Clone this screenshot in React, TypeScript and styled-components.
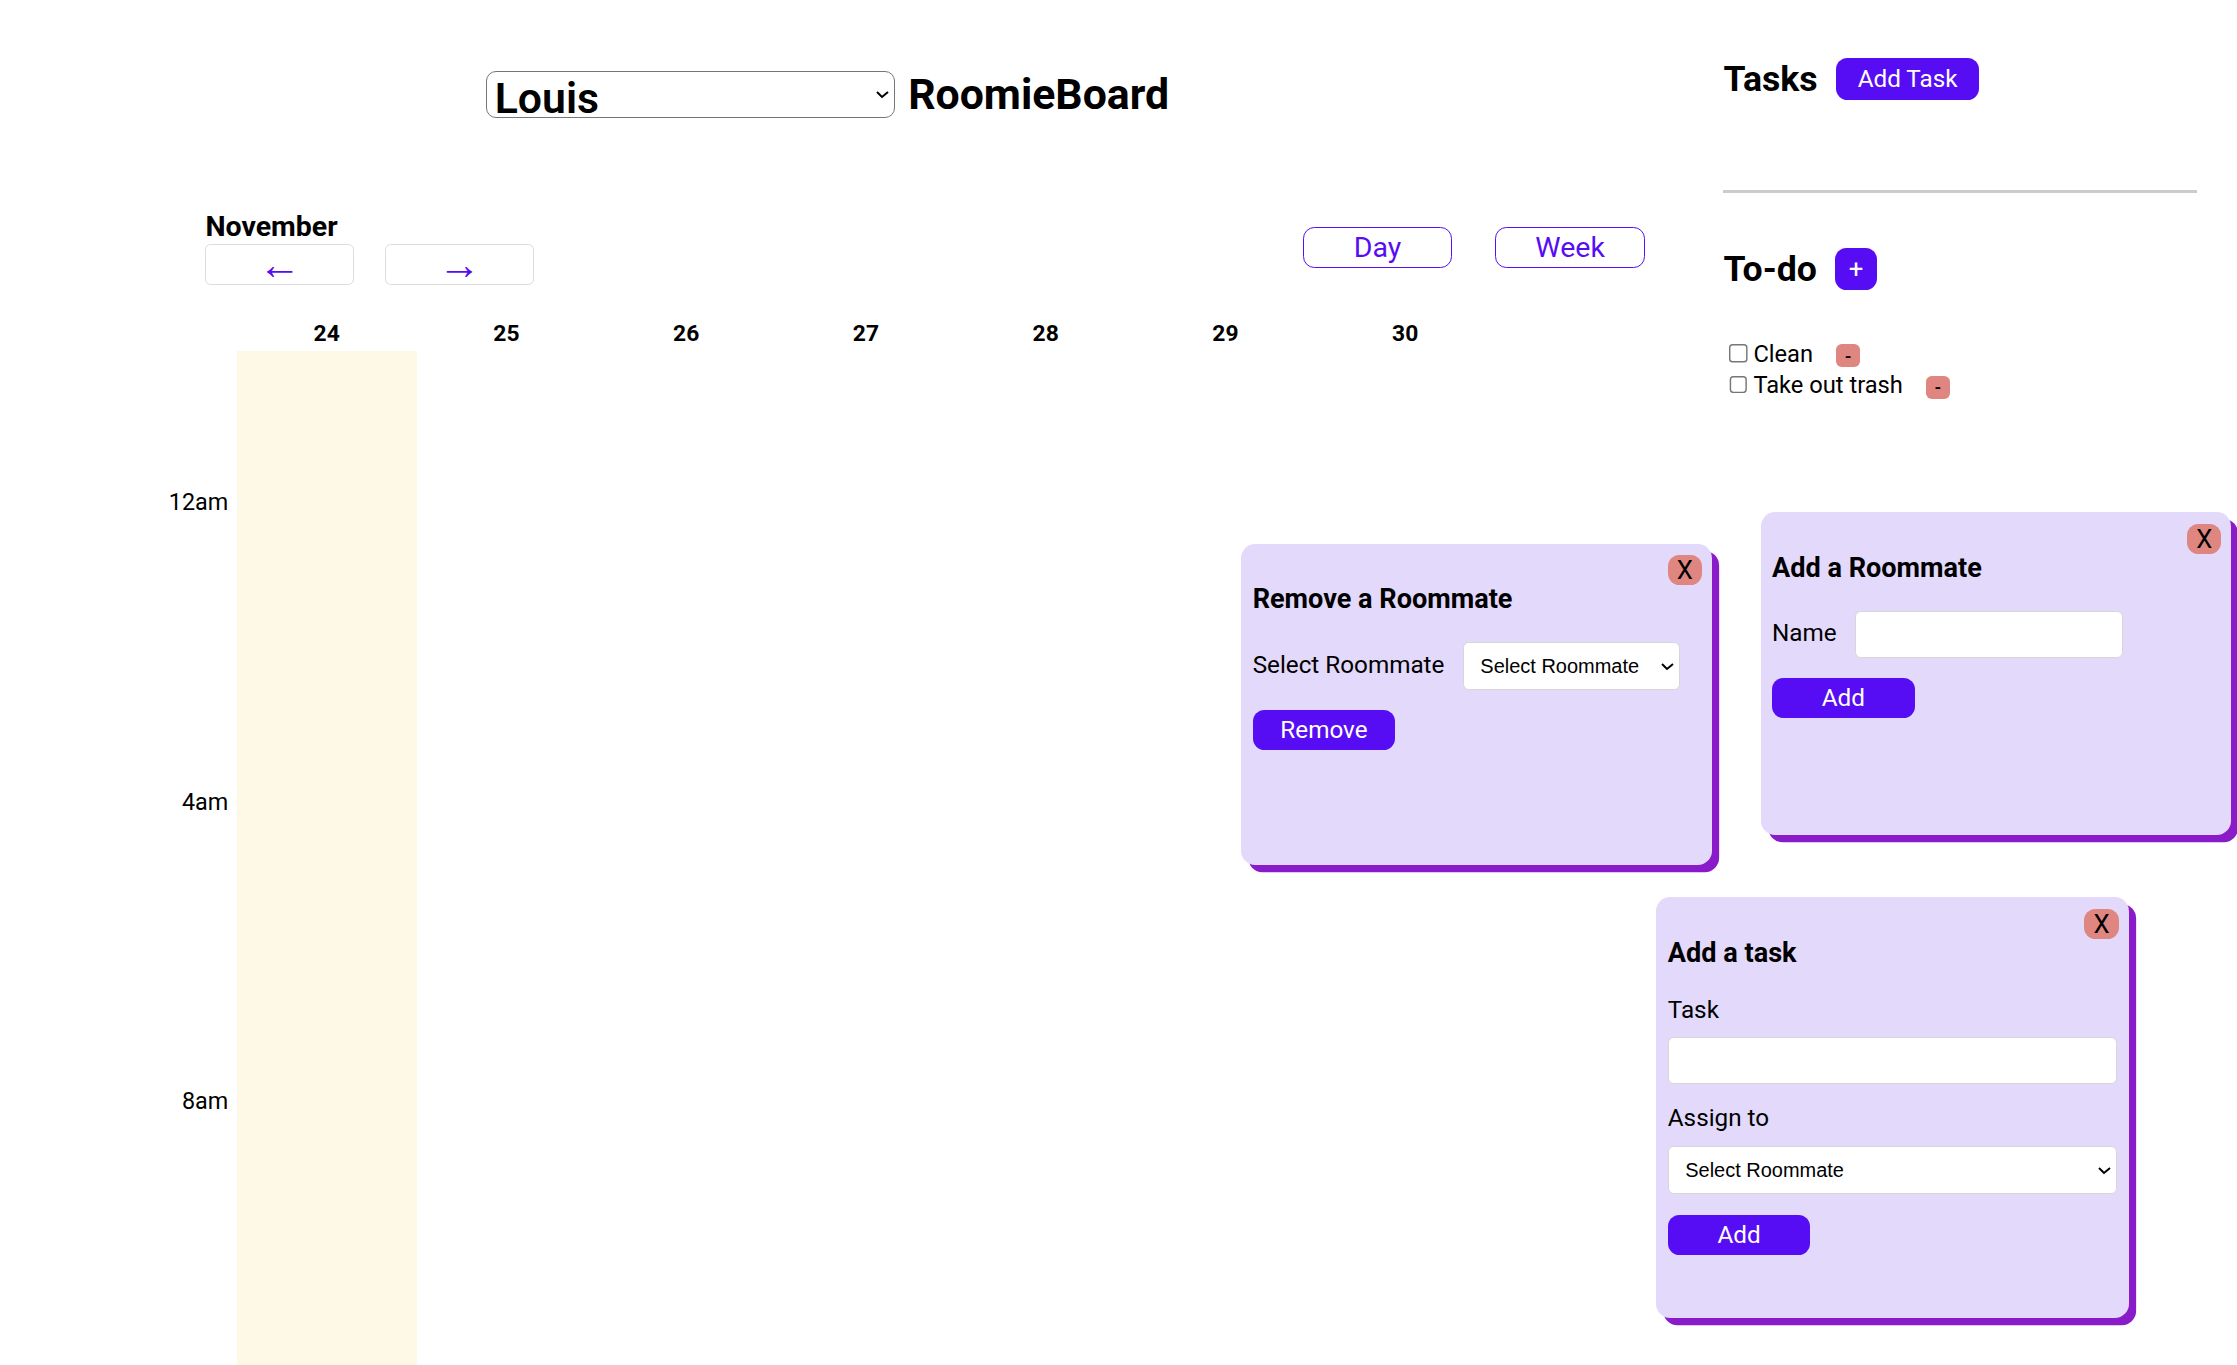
import React from 'react';
import styled, { createGlobalStyle } from 'styled-components';

const PURPLE = '#570df4';
const SALMON = '#e08680';

const days = [24, 25, 26, 27, 28, 29, 30];
const hours = ['12am', '4am', '8am'];
const todos = ['Clean', 'Take out trash'];

const App = () => {
  return (
    <Page>
      <GlobalStyle />
      <CalendarColumn>
        <Header>
          <UserSelect defaultValue="Louis">
            <option>Louis</option>
          </UserSelect>
          <Title>RoomieBoard</Title>
        </Header>

        <Toolbar>
          <MonthBlock>
            <MonthName>November</MonthName>
            <ArrowRow>
              <ArrowButton>←</ArrowButton>
              <ArrowButton>→</ArrowButton>
            </ArrowRow>
          </MonthBlock>
          <ViewSwitch>
            <ViewButton>Day</ViewButton>
            <ViewButton>Week</ViewButton>
          </ViewSwitch>
        </Toolbar>

        <DayHeader>
          <TimeGutter />
          {days.map((d) => (
            <DayNumber key={d}>{d}</DayNumber>
          ))}
        </DayHeader>

        <Grid>
          <TimeColumn>
            {hours.map((h) => (
              <TimeSlot key={h}>{h}</TimeSlot>
            ))}
          </TimeColumn>
          {days.map((d, i) => (
            <DayColumn key={d} $today={i === 0} />
          ))}
        </Grid>
      </CalendarColumn>

      <TasksPanel>
        <SectionHead>
          <SectionTitle>Tasks</SectionTitle>
          <PrimaryButton>Add Task</PrimaryButton>
        </SectionHead>
        <Divider />
        <SectionHead $top={39}>
          <SectionTitle>To-do</SectionTitle>
          <PlusButton>+</PlusButton>
        </SectionHead>
        <TodoList>
          {todos.map((t) => (
            <TodoItem key={t}>
              <Check type="checkbox" />
              <TodoLabel>{t}</TodoLabel>
              <MinusButton>-</MinusButton>
            </TodoItem>
          ))}
        </TodoList>
      </TasksPanel>

      <Card $left={870} $top={381} $w={330} $h={225}>
        <CloseButton>X</CloseButton>
        <CardTitle>Remove a Roommate</CardTitle>
        <InlineField>
          <FieldLabel>Select Roommate</FieldLabel>
          <RoommateSelect $w={152}>
            <option>Select Roommate</option>
          </RoommateSelect>
        </InlineField>
        <ActionButton>Remove</ActionButton>
      </Card>

      <Card $left={1234} $top={359} $w={330} $h={226}>
        <CloseButton>X</CloseButton>
        <CardTitle>Add a Roommate</CardTitle>
        <InlineField>
          <FieldLabel>Name</FieldLabel>
          <TextInput $w={188} />
        </InlineField>
        <ActionButton>Add</ActionButton>
      </Card>

      <Card $left={1161} $top={629} $w={331} $h={295}>
        <CloseButton>X</CloseButton>
        <CardTitle>Add a task</CardTitle>
        <StackField>
          <FieldLabel>Task</FieldLabel>
          <TextInput />
        </StackField>
        <StackField>
          <FieldLabel>Assign to</FieldLabel>
          <RoommateSelect>
            <option>Select Roommate</option>
          </RoommateSelect>
        </StackField>
        <ActionButton $top={15}>Add</ActionButton>
      </Card>
    </Page>
  );
};

const GlobalStyle = createGlobalStyle`
  html, body {
    margin: 0;
    padding: 0;
    background: #fff;
    overflow: hidden;
  }
  body {
    font-family: Roboto, "Liberation Sans", sans-serif;
    color: #000;
  }
  * {
    box-sizing: border-box;
  }
`;

/* the original was laid out at 1568 css px wide, scaled up to fill the window */
const Page = styled.div`
  zoom: 1.4267;
  position: relative;
  display: flex;
  width: 1568px;
  height: 957px;
  overflow: hidden;
`;

const CalendarColumn = styled.section`
  display: flex;
  flex-direction: column;
  width: 1160px;
  flex-shrink: 0;
`;

const Header = styled.header`
  display: flex;
  justify-content: center;
  align-items: center;
  gap: 9px;
  padding-top: 50px;
`;

const UserSelect = styled.select`
  width: 287px;
  height: 33px;
  padding: 0 2px;
  font-family: Roboto, sans-serif;
  font-size: 30px;
  font-weight: 600;
  color: #000;
  background: #fff;
  border: 1px solid #767676;
  border-radius: 7px;
`;

const Title = styled.h1`
  margin: 0;
  font-size: 30px;
  font-weight: 700;
  line-height: 33px;
`;

const Toolbar = styled.div`
  display: flex;
  justify-content: space-between;
  align-items: flex-start;
  margin-top: 64px;
  padding: 0 7px 0 144px;
`;

const MonthBlock = styled.div`
  display: flex;
  flex-direction: column;
`;

const MonthName = styled.div`
  font-size: 20px;
  font-weight: 700;
  line-height: 24px;
`;

const ArrowRow = styled.div`
  display: flex;
  gap: 22px;
`;

const ArrowButton = styled.button`
  width: 104px;
  height: 29px;
  padding: 0;
  background: #fff;
  border: 1px solid #dcdcdc;
  border-radius: 4px;
  color: ${PURPLE};
  font-family: "Liberation Sans", sans-serif;
  font-size: 30px;
  line-height: 20px;
`;

const ViewSwitch = styled.div`
  display: flex;
  gap: 30px;
  margin-top: 12px;
`;

const ViewButton = styled.button`
  width: 105px;
  height: 29px;
  padding: 0;
  background: #fff;
  border: 1px solid ${PURPLE};
  border-radius: 8px;
  color: ${PURPLE};
  font-family: Roboto, sans-serif;
  font-size: 20px;
`;

const DayHeader = styled.div`
  display: flex;
  margin-top: 24px;
  padding-left: 100px;
  height: 22px;
`;

const TimeGutter = styled.div`
  width: 66px;
`;

const DayNumber = styled.div`
  width: 126px;
  text-align: center;
  font-size: 16px;
  font-weight: 700;
  line-height: 19px;
`;

const Grid = styled.div`
  flex: 1;
  display: flex;
  padding-left: 100px;
`;

const TimeColumn = styled.div`
  display: flex;
  flex-direction: column;
  width: 66px;
`;

const TimeSlot = styled.div`
  height: 210px;
  display: flex;
  align-items: center;
  justify-content: flex-end;
  padding-right: 6px;
  padding-top: 2px;
  font-size: 16.4px;
`;

const DayColumn = styled.div<{ $today?: boolean }>`
  width: 126px;
  background: ${(p) => (p.$today ? '#fef8e6' : 'transparent')};
`;

const TasksPanel = styled.aside`
  width: 332px;
  margin-left: 48px;
  padding-top: 41px;
`;

const SectionHead = styled.div<{ $top?: number }>`
  display: flex;
  align-items: center;
  gap: 13px;
  height: 29px;
  margin-top: ${(p) => p.$top ?? 0}px;
`;

const SectionTitle = styled.h2`
  margin: 0;
  font-size: 25px;
  font-weight: 700;
`;

const PrimaryButton = styled.button`
  width: 100px;
  height: 29px;
  padding: 0;
  border: none;
  border-radius: 8px;
  background: ${PURPLE};
  color: #fff;
  font-family: Roboto, sans-serif;
  font-size: 17px;
`;

const PlusButton = styled(PrimaryButton)`
  width: 29px;
  font-size: 18px;
`;

const Divider = styled.hr`
  width: 332px;
  height: 2px;
  margin: 63px 0 0;
  border: none;
  background: #cccccc;
`;

const TodoList = styled.div`
  margin-top: 34px;
`;

const TodoItem = styled.div`
  display: flex;
  align-items: center;
  height: 22px;
`;

const Check = styled.input`
  width: 13px;
  height: 13px;
  margin: 0 4px 0 4px;
`;

const TodoLabel = styled.span`
  font-size: 16.6px;
  margin-right: 16px;
`;

const MinusButton = styled.button`
  width: 17px;
  height: 16px;
  padding: 0;
  margin-top: 3px;
  border: none;
  border-radius: 4px;
  background: ${SALMON};
  color: #000;
  font-family: Roboto, sans-serif;
  font-size: 12px;
  font-weight: 700;
`;

const Card = styled.div<{ $left: number; $top: number; $w: number; $h: number }>`
  position: absolute;
  left: ${(p) => p.$left}px;
  top: ${(p) => p.$top}px;
  width: ${(p) => p.$w}px;
  height: ${(p) => p.$h}px;
  padding: 8px;
  background: #e3d9fa;
  border-radius: 10px;
  box-shadow: 5px 5px 0 #8a1bc9;
`;

const CloseButton = styled.button`
  position: absolute;
  top: 8px;
  right: 7px;
  width: 24px;
  height: 21px;
  padding: 0;
  border: none;
  border-radius: 8px;
  background: ${SALMON};
  color: #000;
  font-family: Roboto, sans-serif;
  font-size: 18px;
`;

const CardTitle = styled.h3`
  margin: 19px 0 18px;
  font-size: 19px;
  font-weight: 700;
  line-height: 24px;
`;

const InlineField = styled.div`
  display: flex;
  align-items: center;
  gap: 13px;
`;

const StackField = styled.div`
  display: flex;
  flex-direction: column;
  gap: 8px;
  margin-bottom: 14px;
`;

const FieldLabel = styled.label`
  font-size: 17px;
  line-height: 21px;
`;

const TextInput = styled.input<{ $w?: number }>`
  width: ${(p) => (p.$w ? `${p.$w}px` : '100%')};
  height: 33px;
  background: #fff;
  border: 1px solid #d6d6d6;
  border-radius: 4px;
`;

const RoommateSelect = styled.select<{ $w?: number }>`
  width: ${(p) => (p.$w ? `${p.$w}px` : '100%')};
  height: 34px;
  padding: 0 8px;
  background: #fff;
  border: 1px solid #d6d6d6;
  border-radius: 4px;
  font-family: "Liberation Sans", Arial, sans-serif;
  font-size: 14px;
  color: #000;
`;

const ActionButton = styled(PrimaryButton)<{ $top?: number }>`
  display: block;
  height: 28px;
  margin-top: ${(p) => p.$top ?? 14}px;
`;

export default App;
